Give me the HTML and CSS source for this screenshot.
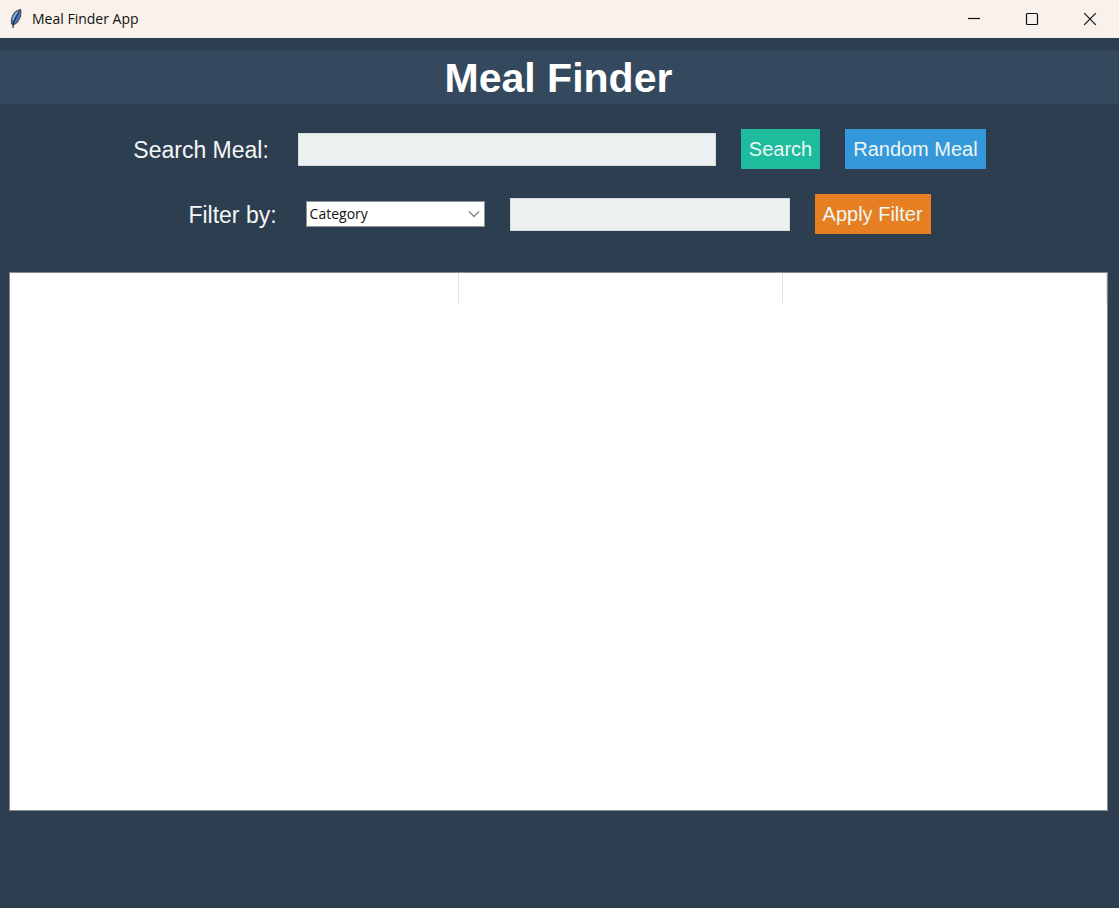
FILE: index.html
```html
<!DOCTYPE html>
<html lang="en">
<head>
<meta charset="utf-8">
<title>Meal Finder App</title>
<link rel="stylesheet" href="styles.css">
</head>
<body>
<div class="window">
  <header class="titlebar">
    <svg class="feather" viewBox="0 0 16 22" aria-hidden="true">
      <path d="M12.500 1.500C8 2.500 4.500 6 3.500 11L3.500 15.500L5.500 17L9.500 14C12 10.500 13.500 5 12.500 1.500Z" fill="#3a77c0" stroke="#55504c" stroke-width="1.200"/>
      <path d="M11 3.500C8 5 6 8 5 12" fill="none" stroke="#7db4e8" stroke-width="1.800"/>
      <path d="M11.500 3L7 11L5 16.500V20" fill="none" stroke="#26303c" stroke-width="1.200"/>
    </svg>
    <span class="caption">Meal Finder App</span>
    <div class="window-controls">
      <button class="control" type="button" aria-label="Minimize"><svg viewBox="0 0 14 14"><path d="M1 6.500H13"/></svg></button>
      <button class="control" type="button" aria-label="Maximize"><svg viewBox="0 0 14 14"><rect x="1.500" y="1.500" width="11" height="11" rx="1"/></svg></button>
      <button class="control" type="button" aria-label="Close"><svg viewBox="0 0 14 14"><path d="M1.200 1.200L12.800 12.800M12.800 1.200L1.200 12.800"/></svg></button>
    </div>
  </header>
  <main class="app">
    <h1 class="heading">Meal Finder</h1>
    <form class="row">
      <label class="label" for="meal">Search Meal:</label>
      <input class="entry entry-wide" id="meal" type="text">
      <button class="button search" type="button">Search</button>
      <button class="button random" type="button">Random Meal</button>
    </form>
    <form class="row">
      <label class="label" for="filter">Filter by:</label>
      <div class="combo">
        <select class="select" id="filter"><option>Category</option><option>Area</option><option>Ingredient</option></select>
        <svg class="chevron" viewBox="0 0 12 8" aria-hidden="true"><path d="M1 1.500L6 6.500L11 1.500"/></svg>
      </div>
      <input class="entry" type="text" aria-label="Filter value">
      <button class="button apply" type="button">Apply Filter</button>
    </form>
    <div class="results">
      <table class="table">
        <thead><tr><th class="col-main"></th><th></th><th></th></tr></thead>
      </table>
    </div>
  </main>
</div>
</body>
</html>
```
FILE: styles.css
```css
* { box-sizing: border-box; }
body {
  margin: 0;
  background: #2d3e50;
  font-family: "Liberation Sans", Arial, sans-serif;
}
.window {
  display: flex;
  flex-direction: column;
  min-height: 100vh;
}
.titlebar {
  display: flex;
  align-items: center;
  height: 38px;
  padding-left: 8px;
  background: #f9f1eb;
  color: #111;
}
.feather { width: 16px; height: 22px; }
.caption {
  margin-left: 8px;
  padding-bottom: 2px;
  font: 14px "Open Sans", "Segoe UI", sans-serif;
}
.window-controls {
  display: flex;
  margin-left: auto;
}
.control {
  display: grid;
  place-items: center;
  width: 58px;
  height: 38px;
  padding: 0;
  border: 0;
  background: none;
}
.control svg {
  width: 14px;
  height: 14px;
  fill: none;
  stroke: #111;
  stroke-width: 1.2;
}
.app {
  display: flex;
  flex: 1;
  flex-direction: column;
  padding: 13px 0 97px;
}
.heading {
  margin: 0 0 25px;
  padding: 2px 2px 0 0;
  background: #34495e;
  color: #fff;
  font-size: 41px;
  line-height: 51px;
  text-align: center;
}
.row {
  display: flex;
  align-items: center;
  justify-content: center;
  gap: 25px;
  margin-bottom: 25px;
}
.label {
  padding: 2px 4px 0 0;
  color: #f5f6f7;
  font-size: 23px;
  white-space: nowrap;
}
.entry {
  flex: 0 1 280px;
  min-width: 0;
  height: 33px;
  padding: 0 4px;
  border: 1px solid #d5dadd;
  background: #ecf0f1;
  font: 20px "Liberation Sans", Arial, sans-serif;
}
.entry-wide { flex-basis: 418px; }
.button {
  height: 40px;
  padding: 0 8px;
  border: 0;
  color: #ecf7f6;
  font: 20px "Liberation Sans", Arial, sans-serif;
  white-space: nowrap;
}
.search { background: #1dbc9c; }
.random { background: #3498db; }
.apply { background: #e67f22; }
.combo {
  position: relative;
  flex: 0 1 179px;
}
.select {
  display: block;
  width: 100%;
  height: 26px;
  padding: 0 24px 2px 3px;
  appearance: none;
  border: 1px solid #919395;
  border-radius: 0;
  background: #fff;
  color: #111;
  font: 14px "Open Sans", "Segoe UI", sans-serif;
}
.chevron {
  position: absolute;
  top: 9px;
  right: 5px;
  width: 12px;
  height: 8px;
  fill: none;
  stroke: #858585;
  stroke-width: 1.4;
  pointer-events: none;
}
.results {
  flex: 1;
  margin: 13px 11px 0 9px;
  border: 1px solid #858b95;
  background: #fff;
}
.table {
  width: 100%;
  border-collapse: separate;
  border-spacing: 0;
  table-layout: fixed;
}
.table th {
  height: 30px;
  padding: 0;
  border-right: 1px solid #e2e2e2;
}
.col-main { width: 40.9%; }
```
